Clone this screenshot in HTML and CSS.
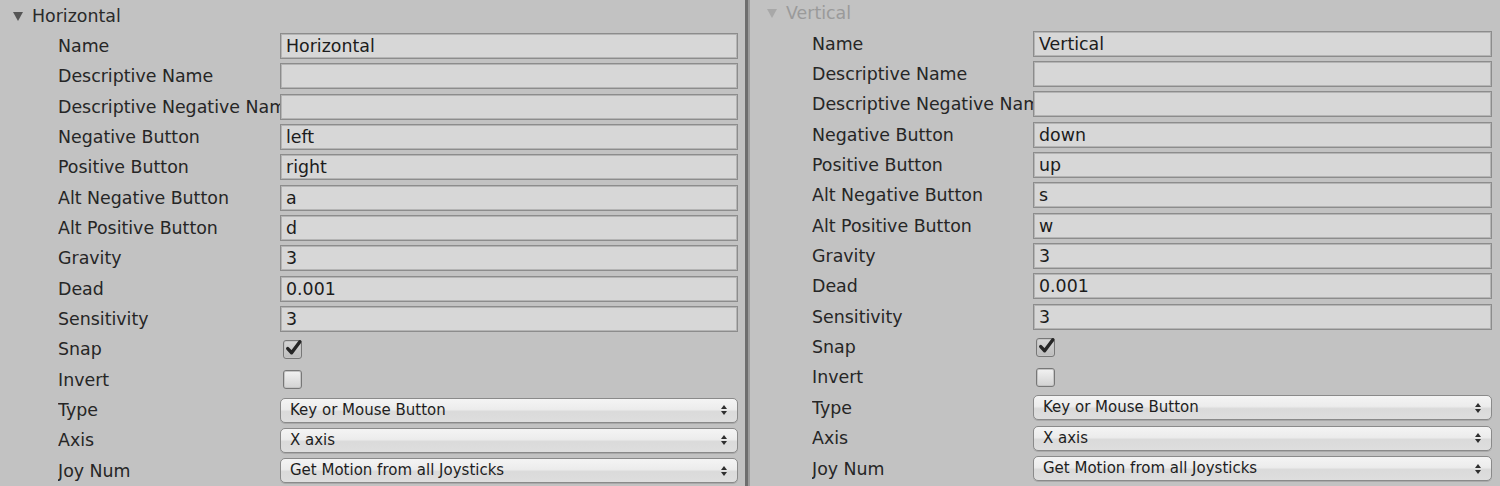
FILE: index.html
```html
<!DOCTYPE html>
<html>
<head>
<meta charset="utf-8">
<link rel="stylesheet" href="styles.css">
</head>
<body>
<div class="page">
  <section class="pane pane-left">
    <div class="header"><span class="tri"></span><span class="title">Horizontal</span></div>
    <div class="grid">
      <div class="label">Name</div><div class="field">Horizontal</div>
      <div class="label">Descriptive Name</div><div class="field"></div>
      <div class="label">Descriptive Negative Name</div><div class="field"></div>
      <div class="label">Negative Button</div><div class="field">left</div>
      <div class="label">Positive Button</div><div class="field">right</div>
      <div class="label">Alt Negative Button</div><div class="field">a</div>
      <div class="label">Alt Positive Button</div><div class="field">d</div>
      <div class="label">Gravity</div><div class="field">3</div>
      <div class="label">Dead</div><div class="field">0.001</div>
      <div class="label">Sensitivity</div><div class="field">3</div>
      <div class="label">Snap</div><div class="cell"><span class="check on"><svg viewBox="0 0 19 19" width="19" height="19"><path d="M4.5 10 L8.2 14 L16 3.5" fill="none" stroke="#262626" stroke-width="3.2" stroke-linecap="round" stroke-linejoin="round"/></svg></span></div>
      <div class="label">Invert</div><div class="cell"><span class="check"></span></div>
      <div class="label">Type</div><div class="cell"><div class="select">Key or Mouse Button<span class="arrows"><i class="up"></i><i class="down"></i></span></div></div>
      <div class="label">Axis</div><div class="cell"><div class="select">X axis<span class="arrows"><i class="up"></i><i class="down"></i></span></div></div>
      <div class="label">Joy Num</div><div class="cell"><div class="select">Get Motion from all Joysticks<span class="arrows"><i class="up"></i><i class="down"></i></span></div></div>
    </div>
  </section>
  <div class="divider"></div>
  <section class="pane pane-right">
    <div class="header dim"><span class="tri"></span><span class="title">Vertical</span></div>
    <div class="grid">
      <div class="label">Name</div><div class="field">Vertical</div>
      <div class="label">Descriptive Name</div><div class="field"></div>
      <div class="label">Descriptive Negative Name</div><div class="field"></div>
      <div class="label">Negative Button</div><div class="field">down</div>
      <div class="label">Positive Button</div><div class="field">up</div>
      <div class="label">Alt Negative Button</div><div class="field">s</div>
      <div class="label">Alt Positive Button</div><div class="field">w</div>
      <div class="label">Gravity</div><div class="field">3</div>
      <div class="label">Dead</div><div class="field">0.001</div>
      <div class="label">Sensitivity</div><div class="field">3</div>
      <div class="label">Snap</div><div class="cell"><span class="check on"><svg viewBox="0 0 19 19" width="19" height="19"><path d="M4.5 10 L8.2 14 L16 3.5" fill="none" stroke="#262626" stroke-width="3.2" stroke-linecap="round" stroke-linejoin="round"/></svg></span></div>
      <div class="label">Invert</div><div class="cell"><span class="check"></span></div>
      <div class="label">Type</div><div class="cell"><div class="select">Key or Mouse Button<span class="arrows"><i class="up"></i><i class="down"></i></span></div></div>
      <div class="label">Axis</div><div class="cell"><div class="select">X axis<span class="arrows"><i class="up"></i><i class="down"></i></span></div></div>
      <div class="label">Joy Num</div><div class="cell"><div class="select">Get Motion from all Joysticks<span class="arrows"><i class="up"></i><i class="down"></i></span></div></div>
    </div>
  </section>
</div>
</body>
</html>
```

FILE: styles.css
```css
html, body {
  margin: 0;
  padding: 0;
  background: #c2c2c2;
}
body {
  font-family: "DejaVu Sans", "Liberation Sans", sans-serif;
  font-size: 17.4px;
  color: #262626;
  overflow: hidden;
}
.page {
  display: flex;
  width: 1500px;
  height: 486px;
}
.pane {
  display: flex;
  flex-direction: column;
}
.pane-left {
  width: 745px;
  padding-top: 1px;
}
.pane-right {
  flex: 1;
  margin-top: -2px;
}
.divider {
  width: 5px;
  background: linear-gradient(to right, #6e6e6e 0, #6e6e6e 3px, #9c9c9c 3px, #9c9c9c 5px);
}
.header {
  height: 30.36px;
  display: flex;
  align-items: center;
  padding-left: 13px;
}
.tri {
  width: 0;
  height: 0;
  border-left: 5.5px solid transparent;
  border-right: 5.5px solid transparent;
  border-top: 9px solid #555555;
  margin-right: 9px;
  margin-top: 1px;
}
.title {
  color: #2a2a2a;
}
.header.dim {
  padding-left: 17px;
}
.header.dim .tri {
  border-top-color: #a8a8a8;
}
.header.dim .title {
  color: #9a9a9a;
}
.grid {
  display: grid;
  grid-auto-rows: 30.36px;
  align-items: center;
}
.pane-left .grid {
  grid-template-columns: 222px 458px;
  padding-left: 58px;
}
.pane-right .grid {
  grid-template-columns: 221px 459px;
  padding-left: 62px;
}
.label {
  white-space: nowrap;
  overflow: hidden;
  color: #262626;
}
.field {
  height: 26px;
  box-sizing: border-box;
  background: #d7d7d7;
  border: 1px solid #8c8c8c;
  box-shadow: inset 0 0 0 1px #b4b4b4;
  padding-left: 5px;
  line-height: 24px;
  color: #1c1c1c;
  white-space: nowrap;
  overflow: hidden;
}
.cell {
  display: flex;
  align-items: center;
}
.check {
  width: 19px;
  height: 19px;
  box-sizing: border-box;
  margin-left: 3px;
  border: 1px solid #777777;
  border-radius: 3px;
  background: linear-gradient(#f2f2f2, #d2d2d2);
  box-shadow: inset 0 0 0 1px #c4c4c4;
  position: relative;
}
.check.on {
  background: linear-gradient(#d6d6d6, #bcbcbc);
}
.check svg {
  position: absolute;
  left: -1px;
  top: -3px;
  width: 20px;
  height: 20px;
}
.select {
  width: 100%;
  height: 25px;
  box-sizing: border-box;
  border: 1px solid #8a8a8a;
  border-radius: 5px;
  background: linear-gradient(#f4f4f4 0%, #ececec 45%, #dadada 55%, #dedede 100%);
  box-shadow: 0 1px 0 #a9a9a9;
  font-size: 15px;
  line-height: 23px;
  padding-left: 9px;
  color: #1e1e1e;
  display: flex;
  align-items: center;
  justify-content: space-between;
}
.arrows {
  display: flex;
  flex-direction: column;
  align-items: center;
  gap: 2px;
  margin-right: 10px;
}
.arrows i {
  display: block;
  width: 0;
  height: 0;
  border-left: 3.5px solid transparent;
  border-right: 3.5px solid transparent;
}
.arrows .up {
  border-bottom: 4px solid #2e2e2e;
}
.arrows .down {
  border-top: 4px solid #2e2e2e;
}
```
